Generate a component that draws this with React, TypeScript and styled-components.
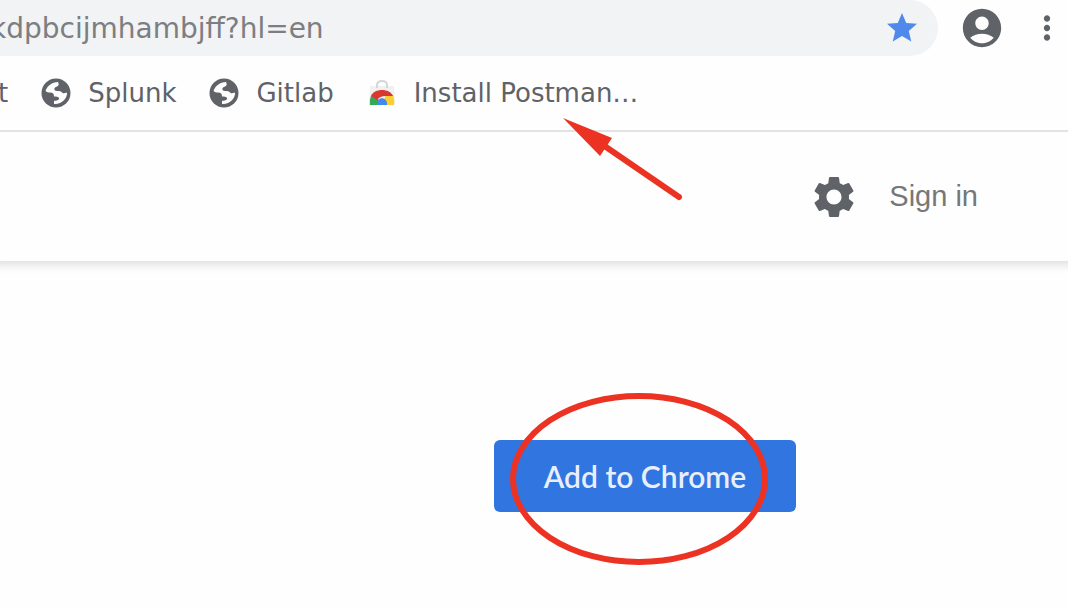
import React from "react";
import styled, { createGlobalStyle } from "styled-components";
import { MdAccountCircle, MdMoreVert, MdSettings, MdStar } from "react-icons/md";

const GlobalStyle = createGlobalStyle`
  *, *::before, *::after { box-sizing: border-box; }
  body { margin: 0; background: #fefefe; }
  button, input { font: inherit; border: 0; padding: 0; background: none; }
`;

const Page = styled.div`
  min-height: 100vh;
  overflow: hidden;
  color: #5f6368;
  font-family: "DejaVu Sans", sans-serif;
`;

const BrowserBar = styled.header`
  position: relative;
  z-index: 1;
  border-bottom: 2px solid #e3e3e3;
  background: #fefefe;
`;

const Toolbar = styled.div`
  display: flex;
  align-items: center;
  gap: 21px;
`;

const AddressBar = styled.div`
  flex: 1;
  min-width: 0;
  display: flex;
  align-items: center;
  height: 56px;
  padding-right: 18px;
  border-radius: 0 28px 28px 0;
  background: #f1f3f4;
`;

const AddressInput = styled.input`
  flex: 1;
  min-width: 0;
  height: 56px;
  text-indent: -10px;
  color: #7c7e81;
  font-size: 28px;
  outline: 0;
`;

const IconButton = styled.button<{ $tone?: string }>`
  display: flex;
  color: ${({ $tone }) => $tone ?? "#5f6368"};
  cursor: pointer;
`;

const ToolbarActions = styled.div`
  display: flex;
  align-items: center;
  gap: 23px;
  padding-right: 2px;
`;

const BookmarksBar = styled.nav`
  display: flex;
  align-items: center;
  gap: 33px;
  height: 74px;
  margin-left: -2px;
`;

const Bookmark = styled.a`
  position: relative;
  display: flex;
  align-items: center;
  gap: 17px;
  color: #5f6368;
  font-size: 26px;
  line-height: 32px;
  text-decoration: none;
  white-space: nowrap;
`;

const Arrow = styled.svg`
  position: absolute;
  top: 40px;
  left: 195px;
  pointer-events: none;
`;

const StoreHeader = styled.header`
  display: flex;
  align-items: center;
  justify-content: flex-end;
  gap: 30px;
  height: 129px;
  padding-right: 90px;
  background: #fefefe;
  box-shadow: 0 -6px 10px 9px rgba(0, 0, 0, 0.14);
`;

const SignIn = styled.a`
  color: #757779;
  font-family: "Liberation Sans", Arial, sans-serif;
  font-size: 29px;
  text-decoration: none;
`;

const Content = styled.main`
  display: flex;
  justify-content: center;
  padding: 179px 0 96px 222px;
`;

const Highlighted = styled.div`
  position: relative;
`;

const AddButton = styled.button`
  height: 72px;
  padding: 0 50px;
  border-radius: 6px;
  background: #3175e1;
  color: #e8effb;
  font-family: Lato, sans-serif;
  font-size: 30px;
  font-weight: 600;
  cursor: pointer;
`;

const Ring = styled.svg`
  position: absolute;
  top: -48px;
  left: 15px;
  pointer-events: none;
`;

const GlobeIcon = () => (
  <svg width="30" height="30" viewBox="0 0 30 30" aria-hidden="true">
    <circle cx="15" cy="15" r="14.500" fill="#5f6368" />
    <path
      d="M4.500 13C6 8 11 4 17 4C18 6 18 7.500 16 8.500C13.500 9.500 12.500 11 14 12.500C16.500 13.500 19 12.500 20.500 14C22 16 24 15 26 14.500C26.500 20 21 26.500 13 26V23C15 22.500 18.500 22.500 18 20C17.500 18.500 15 18.500 13 18.500C13 16 12 14.500 9 14.500C7 14.500 6 14 4.500 13Z"
      fill="#fefefe"
    />
  </svg>
);

const WebStoreIcon = () => (
  <svg width="30" height="30" viewBox="-1 0 30 30" aria-hidden="true">
    <path d="M2 8H26L27 27H1Z" fill="#f1f1f1" />
    <path d="M9 10V7C9 1.500 19 1.500 19 7V10" fill="none" stroke="#d3d7d5" strokeWidth="2" />
    <path d="M3 18L9 17L12 27H2Q1 22 3 18Z" fill="#35a853" />
    <path d="M17 17L25 17Q27 22 26 27H16Z" fill="#fbcf32" />
    <path d="M3 18C6 10 22 10 25 18H19C16 18 12 18 9 22Z" fill="#d93831" />
    <path d="M9 27C8 18 20 18 19 27Z" fill="#4489ee" />
  </svg>
);

export default function App() {
  return (
    <Page>
      <GlobalStyle />
      <BrowserBar>
        <Toolbar>
          <AddressBar>
            <AddressInput aria-label="Address" defaultValue="kdpbcijmhambjff?hl=en" />
            <IconButton $tone="#4f89ec" aria-label="Edit bookmark">
              <MdStar size={36} />
            </IconButton>
          </AddressBar>
          <ToolbarActions>
            <IconButton aria-label="Profile">
              <MdAccountCircle size={46} />
            </IconButton>
            <IconButton aria-label="More options">
              <MdMoreVert size={38} />
            </IconButton>
          </ToolbarActions>
        </Toolbar>
        <BookmarksBar aria-label="Bookmarks">
          <Bookmark href="#">t</Bookmark>
          <Bookmark href="#splunk">
            <GlobeIcon />
            Splunk
          </Bookmark>
          <Bookmark href="#gitlab">
            <GlobeIcon />
            Gitlab
          </Bookmark>
          <Bookmark href="#postman">
            <WebStoreIcon />
            Install Postman…
            <Arrow width="124" height="88" viewBox="0 0 124 88" aria-hidden="true">
              <path d="M44 30L117 80" stroke="#ec3323" strokeWidth="6" strokeLinecap="round" />
              <path d="M1 1L50 21L38 39Z" fill="#ec3323" />
            </Arrow>
          </Bookmark>
        </BookmarksBar>
      </BrowserBar>
      <StoreHeader>
        <IconButton aria-label="Settings">
          <MdSettings size={50} />
        </IconButton>
        <SignIn href="#signin">Sign in</SignIn>
      </StoreHeader>
      <Content>
        <Highlighted>
          <AddButton>Add to Chrome</AddButton>
          <Ring width="260" height="174" viewBox="0 0 260 174" aria-hidden="true">
            <ellipse cx="130" cy="87" rx="126" ry="83" fill="none" stroke="#ec3323" strokeWidth="6" />
          </Ring>
        </Highlighted>
      </Content>
    </Page>
  );
}
